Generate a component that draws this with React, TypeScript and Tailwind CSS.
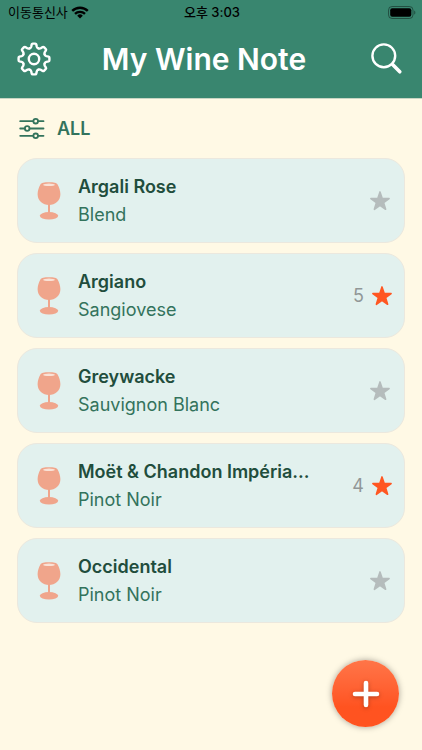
type Wine = { name: string; grape: string; rating?: number };

const WINES: Wine[] = [
  { name: "Argali Rose", grape: "Blend" },
  { name: "Argiano", grape: "Sangiovese", rating: 5 },
  { name: "Greywacke", grape: "Sauvignon Blanc" },
  { name: "Moët & Chandon Impéria...", grape: "Pinot Noir", rating: 4 },
  { name: "Occidental", grape: "Pinot Noir" },
];

const WifiIcon = () => (
  <svg viewBox="0 0 18 13" className="w-[18px] h-[13px]" aria-hidden="true">
    <g fill="none" stroke="currentColor" strokeWidth="2.4">
      <path d="M1.2 4.9a11.2 11.2 0 0 1 15.6 0" />
      <path d="M4 7.9a7.2 7.2 0 0 1 10 0" />
    </g>
    <path d="M9 12.6 6.2 9.7a4 4 0 0 1 5.6 0Z" fill="currentColor" />
  </svg>
);

const BatteryIcon = () => (
  <svg viewBox="0 0 28 13" className="w-7 h-[13px]" aria-hidden="true">
    <rect x="0.5" y="0.5" width="24.5" height="12" rx="3.6" fill="none" stroke="#000" strokeOpacity="0.4" />
    <rect x="2.2" y="2.2" width="21.1" height="8.6" rx="2" fill="#000" />
    <path d="M26.2 4.4c1.6.6 1.6 3.6 0 4.2Z" fill="#000" fillOpacity="0.4" />
  </svg>
);

// one tooth, repeated every 45 degrees
const GearIcon = () => (
  <svg viewBox="-17 -17 34 34" className="w-[34px] h-[34px]" fill="none" stroke="currentColor" strokeWidth="2.4" strokeLinejoin="round" strokeLinecap="round" aria-hidden="true">
    <circle r="5.2" />
    {[0, 45, 90, 135, 180, 225, 270, 315].map((deg) => (
      <path
        key={deg}
        transform={`rotate(${deg})`}
        d="M-4.4-10.7C-3.4-11.1-3-11.5-2.8-12.3L-2.3-14.6Q-2.1-15.4-1.3-15.4H1.300Q2.100-15.4 2.300-14.6L2.800-12.300C3-11.500 3.400-11.100 4.400-10.700"
      />
    ))}
  </svg>
);

const SearchIcon = () => (
  <svg viewBox="0 0 32 32" className="w-8 h-8" fill="none" stroke="currentColor" strokeLinecap="round" aria-hidden="true">
    <circle cx="12.8" cy="12.8" r="11.4" strokeWidth="2.4" />
    <path d="m21.6 21.6 7.2 7.2" strokeWidth="3.6" />
  </svg>
);

const FilterIcon = () => (
  <svg viewBox="0 0 26 21" className="w-[26px] h-[21px]" fill="none" stroke="currentColor" strokeWidth="1.8" strokeLinecap="round" aria-hidden="true">
    <path d="M1.2 3.2h13M19.2 3.2h5.300M1.200 10.500h4.500M10.700 10.500h13.800M1.200 17.800h13M19.200 17.800h5.300" />
    <circle cx="16.7" cy="3.2" r="2.3" />
    <circle cx="8.2" cy="10.5" r="2.3" />
    <circle cx="16.7" cy="17.8" r="2.3" />
  </svg>
);

const GlassIcon = () => (
  <svg viewBox="0 0 24 38" className="w-6 h-[38px] shrink-0 text-[#f0a58b]" fill="currentColor" aria-hidden="true">
    <path d="M3.400 2.600C4 .9 7.500.3 12 .3s8 .6 8.600 2.300C22.200 5.600 23.400 9 23.400 12.300c0 6.500-5.200 10.700-11.400 10.700S.6 18.800.6 12.300C.6 9 1.800 5.600 3.400 2.600Z" />
    <ellipse cx="12" cy="2.800" rx="6" ry="1.200" fill="#f9e3d8" />
    <path d="M11 22h2v9h-2z" />
    <ellipse cx="12" cy="33.800" rx="9.200" ry="3.700" />
  </svg>
);

const StarIcon = () => (
  <svg viewBox="0 0 22 22" className="w-[22px] h-[22px]" fill="currentColor" stroke="currentColor" strokeWidth="1.6" strokeLinejoin="round" aria-hidden="true">
    <path d="m11 1.9 2.2 6.500 6.900.1-5.500 4.200 2 6.600L11 15.300l-5.600 4 2-6.600L1.900 8.500l6.900-.1Z" />
  </svg>
);

const WineCard = ({ wine }: { wine: Wine }) => (
  <li className="flex items-center h-[85px] pl-[19px] pr-[13px] rounded-[20px] border border-[#ebe8de] bg-[#e2f1ee]">
    <GlassIcon />
    <div className="flex-1 min-w-0 ml-[17px]">
      <h2 className="truncate text-lg leading-7 font-semibold text-[#214d3c]">{wine.name}</h2>
      <p className="truncate text-lg leading-7 text-[#33735c]">{wine.grape}</p>
    </div>
    {wine.rating ? (
      <div className="flex items-center gap-[7px] -mr-[2px] text-[#ff5722]">
        <span className="text-lg leading-7 text-[#919797]">{wine.rating}</span>
        <StarIcon />
      </div>
    ) : (
      <div className="text-[#b5bcbc]">
        <StarIcon />
      </div>
    )}
  </li>
);

export default function App() {
  return (
    <div className="min-h-screen bg-[#fff9e5] font-['Inter','Noto_Sans_CJK_KR',sans-serif]">
      <header className="bg-[#39866f] border-b border-[#c9d5c3]">
        <div className="grid grid-cols-3 items-center h-6 pl-2 pr-[6px] text-[13px] leading-5 text-black">
          <div className="flex items-center gap-[3px]">
            <span>이동통신사</span>
            <WifiIcon />
          </div>
          <span className="text-center font-medium">오후 3:03</span>
          <div className="flex justify-end">
            <BatteryIcon />
          </div>
        </div>
        <div className="flex items-center h-[74px] pl-[17px] pr-[19px] pb-1 text-white">
          <button type="button" aria-label="Settings">
            <GearIcon />
          </button>
          <h1 className="flex-1 pr-[14px] text-center text-3xl leading-10 font-semibold">My Wine Note</h1>
          <button type="button" aria-label="Search">
            <SearchIcon />
          </button>
        </div>
      </header>

      <main className="px-[17px] pb-24">
        <button type="button" className="flex items-center gap-3 h-[59px] pl-[2px] text-[#33735c]">
          <FilterIcon />
          <span className="text-lg leading-7 font-semibold">ALL</span>
        </button>
        <ul className="flex flex-col gap-[10px]">
          {WINES.map((wine) => (
            <WineCard key={wine.name} wine={wine} />
          ))}
        </ul>
      </main>

      <button
        type="button"
        aria-label="Add wine"
        className="fixed right-[23px] bottom-[23px] flex items-center justify-center w-[67px] h-[67px] rounded-full bg-linear-to-b from-[#ff7548] to-[#ff5320] to-70% text-white shadow-[0_0_6px_rgba(0,0,0,0.35)]"
      >
        <svg viewBox="0 0 28 28" className="w-7 h-7 drop-shadow-[0_1px_2px_rgba(0,0,0,0.3)]" fill="none" stroke="currentColor" strokeWidth="4.6" strokeLinecap="round" aria-hidden="true">
          <path d="M14 3v22M3 14h22" />
        </svg>
      </button>
    </div>
  );
}
